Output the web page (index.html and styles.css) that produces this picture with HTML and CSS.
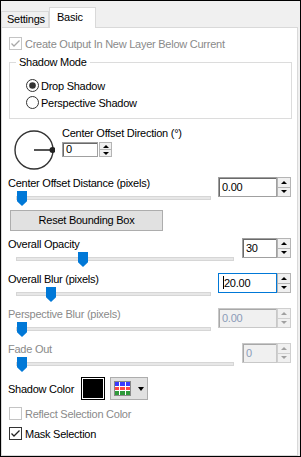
FILE: index.html
```html
<!DOCTYPE html>
<html>
<head>
<meta charset="utf-8">
<link rel="stylesheet" href="styles.css">
</head>
<body>
<div class="frame">
  <div class="tabs">
    <div class="tab">Settings</div>
    <div class="tab active">Basic</div>
  </div>
  <div class="panel">
    <div class="check-row first disabled">
      <svg class="cb" width="13" height="13" viewBox="0 0 13 13"><rect class="cb-box" x="0.5" y="0.5" width="12" height="12"/><path class="cb-mark" d="M2.5 6.5 L5 9 L10.5 3.5"/></svg>
      <span>Create Output In New Layer Below Current</span>
    </div>

    <fieldset class="group">
      <legend>Shadow Mode</legend>
      <div class="radio-row first">
        <svg class="rb" width="13" height="13" viewBox="0 0 13 13"><circle class="rb-ring" cx="6.5" cy="6.5" r="6"/><circle class="rb-dot" cx="6.5" cy="6.5" r="3.3"/></svg>
        <span>Drop Shadow</span>
      </div>
      <div class="radio-row">
        <svg class="rb" width="13" height="13" viewBox="0 0 13 13"><circle class="rb-ring" cx="6.5" cy="6.5" r="6"/></svg>
        <span>Perspective Shadow</span>
      </div>
    </fieldset>

    <div class="dial-row">
      <svg class="dial" width="42" height="42" viewBox="0 0 42 42"><circle class="dial-ring" cx="21" cy="21" r="19"/><line class="dial-hand" x1="21" y1="21" x2="39" y2="21"/><circle class="dial-knob" cx="39.5" cy="21" r="3"/></svg>
      <div class="dial-col">
        <div class="lbl">Center Offset Direction (°)</div>
        <div class="spin small">
          <div class="box">0</div>
          <div class="arrows"><span class="up"></span><span class="dn"></span></div>
        </div>
      </div>
    </div>

    <div class="ctl dist">
      <div class="lbl">Center Offset Distance (pixels)</div>
      <div class="spin">
        <div class="box">0.00</div>
        <div class="arrows"><span class="up"></span><span class="dn"></span></div>
      </div>
      <div class="slider"><div class="track"></div><div class="thumb" style="left:1px"></div></div>
    </div>

    <div class="btn">Reset Bounding Box</div>

    <div class="ctl narrow opacity">
      <div class="lbl">Overall Opacity</div>
      <div class="spin">
        <div class="box">30</div>
        <div class="arrows"><span class="up"></span><span class="dn"></span></div>
      </div>
      <div class="slider"><div class="track"></div><div class="thumb" style="left:62px"></div></div>
    </div>

    <div class="ctl">
      <div class="lbl">Overall Blur (pixels)</div>
      <div class="spin focused">
        <div class="box"><span class="caret"></span>20.00</div>
        <div class="arrows"><span class="up"></span><span class="dn"></span></div>
      </div>
      <div class="slider"><div class="track"></div><div class="thumb" style="left:30px"></div></div>
    </div>

    <div class="ctl disabled">
      <div class="lbl">Perspective Blur (pixels)</div>
      <div class="spin">
        <div class="box">0.00</div>
        <div class="arrows"><span class="up"></span><span class="dn"></span></div>
      </div>
      <div class="slider"><div class="track"></div><div class="thumb" style="left:1px"></div></div>
    </div>

    <div class="ctl narrow disabled">
      <div class="lbl">Fade Out</div>
      <div class="spin">
        <div class="box">0</div>
        <div class="arrows"><span class="up"></span><span class="dn"></span></div>
      </div>
      <div class="slider"><div class="track"></div><div class="thumb" style="left:1px"></div></div>
    </div>

    <div class="color-row">
      <div class="color-lbl">Shadow Color</div>
      <div class="swatch"><div class="swatch-fill"></div></div>
      <div class="pick-btn">
        <svg class="palette" width="17" height="15" viewBox="0 0 17 15">
          <rect class="pal-bg" x="0.5" y="0.5" width="16" height="14"/>
          <rect class="pal-b" x="1" y="1" width="4" height="4"/><rect class="pal-b" x="6" y="1" width="5" height="4"/><rect class="pal-b" x="12" y="1" width="4" height="4"/>
          <rect class="pal-r" x="1" y="6" width="4" height="3"/><rect class="pal-r" x="6" y="6" width="5" height="3"/><rect class="pal-r" x="12" y="6" width="4" height="3"/>
          <rect class="pal-g" x="1" y="10" width="4" height="4"/><rect class="pal-g" x="6" y="10" width="5" height="4"/><rect class="pal-g" x="12" y="10" width="4" height="4"/>
        </svg>
        <span class="drop"></span>
      </div>
    </div>

    <div class="check-row reflect disabled">
      <svg class="cb" width="13" height="13" viewBox="0 0 13 13"><rect class="cb-box" x="0.5" y="0.5" width="12" height="12"/></svg>
      <span>Reflect Selection Color</span>
    </div>

    <div class="check-row mask">
      <svg class="cb" width="13" height="13" viewBox="0 0 13 13"><rect class="cb-box" x="0.5" y="0.5" width="12" height="12"/><path class="cb-mark" d="M2.5 6.5 L5 9 L10.5 3.5"/></svg>
      <span>Mask Selection</span>
    </div>
  </div>
</div>
</body>
</html>
```

FILE: styles.css
```css
html, body {
  margin: 0;
  padding: 0;
}

body {
  font-family: "Liberation Sans", Arial, sans-serif;
  font-size: 11px;
  letter-spacing: -0.25px;
  color: #000;
  background: #fff;
}

.frame {
  width: 301px;
  height: 457px;
  box-sizing: border-box;
  border: 1px solid #000;
  background: #f0f0f0;
  padding-right: 2px;
  display: flex;
  flex-direction: column;
}

/* Tabs */
.tabs {
  display: flex;
  align-items: flex-end;
  height: 26px;
  flex: none;
  position: relative;
  z-index: 1;
}

.tab {
  box-sizing: border-box;
  height: 16px;
  width: 48px;
  border: 1px solid #d9d9d9;
  border-bottom: none;
  background: #f0f0f0;
  padding-left: 5px;
  line-height: 14px;
  white-space: nowrap;
}

.tab.active {
  height: 21px;
  width: 47px;
  background: #fff;
  margin-bottom: -1px;
  padding-left: 7px;
  padding-top: 2px;
}

/* Panel */
.panel {
  flex: 1;
  box-sizing: border-box;
  background: #fff;
  border: 1px solid #d9d9d9;
  padding: 0 6px;
  display: flex;
  flex-direction: column;
}

.lbl {
  line-height: 14px;
  white-space: nowrap;
}

.disabled .lbl,
.check-row.disabled span {
  color: #8a8a8a;
}

/* Checkboxes */
.check-row {
  display: flex;
  align-items: center;
  gap: 3px;
  height: 15px;
  margin-left: 1px;
  white-space: nowrap;
}

.check-row.first { margin-top: 8px; }
.check-row.reflect { margin-top: 6px; }
.check-row.mask { margin-top: 5px; }

.cb { flex: none; display: block; }
.cb-box { fill: #fff; stroke: #333; }
.cb-mark { fill: none; stroke: #222; stroke-width: 1.3; }
.disabled .cb-box { stroke: #c4c4c4; }
.disabled .cb-mark { stroke: #a8a8a8; }

/* Group box */
.group {
  margin: 4px 0 0 1px;
  width: 283px;
  box-sizing: border-box;
  border: 1px solid #dcdcdc;
  padding: 0 0 7px 0;
  min-width: 0;
}

.group legend {
  margin-left: 6px;
  padding: 0 3px;
  line-height: 14px;
}

.radio-row {
  display: flex;
  align-items: center;
  gap: 2px;
  height: 17px;
  padding-left: 16px;
  white-space: nowrap;
}

.radio-row.first { margin-top: 8px; }

.rb { display: block; flex: none; }
.rb-ring { fill: #fff; stroke: #333; }
.rb-dot { fill: #333; }

/* Direction dial */
.dial-row {
  display: flex;
  margin-top: 7px;
  height: 46px;
}

.dial {
  display: block;
  margin: 3px 0 0 5px;
  flex: none;
}

.dial-ring { fill: none; stroke: #333; stroke-width: 1.4; }
.dial-hand { stroke: #555; stroke-width: 2; }
.dial-knob { fill: #222; }

.dial-col {
  margin-left: 7px;
  display: flex;
  flex-direction: column;
  align-items: flex-start;
}

.dial-col .spin { margin-top: 2px; }

/* Spin boxes */
.spin {
  display: flex;
}

.spin .box {
  box-sizing: border-box;
  height: 20px;
  width: 59px;
  border: 1px solid #a0a0a0;
  box-shadow: inset 1px 1px 0 #6a6a6a;
  background: #fff;
  padding-left: 3px;
  line-height: 18px;
  white-space: nowrap;
}

.narrow .spin .box { width: 35px; }

.spin.small .box {
  width: 36px;
  height: 15px;
  line-height: 13px;
}

.spin.small .arrows {
  margin-left: 1px;
  width: 13px;
  height: 15px;
}

.arrows {
  width: 14px;
  height: 20px;
  display: flex;
  flex-direction: column;
}

.arrows span {
  flex: 1;
  box-sizing: border-box;
  border: 1px solid #b4b4b4;
  background: #f0f0f0;
  display: flex;
  align-items: center;
  justify-content: center;
}

.arrows .dn { border-top: none; }

.arrows span::after {
  content: "";
  width: 0;
  height: 0;
  border-left: 3px solid transparent;
  border-right: 3px solid transparent;
}

.arrows .up::after { border-bottom: 3px solid #000; }
.arrows .dn::after { border-top: 3px solid #000; }

.spin.focused .box {
  border-color: #0078d7;
  box-shadow: none;
  padding-left: 4px;
}

.caret {
  display: inline-block;
  width: 1px;
  height: 13px;
  background: #000;
  vertical-align: -2px;
}

.disabled .spin .box {
  background: #f0f0f0;
  border-color: #c8c8c8;
  box-shadow: inset 1px 1px 0 #a8a8a8;
  color: #8c9bb8;
}

.disabled .arrows span { border-color: #cfcfcf; }
.disabled .arrows .up::after { border-bottom-color: #a0a0a0; }
.disabled .arrows .dn::after { border-top-color: #a0a0a0; }

/* Slider controls */
.ctl {
  display: grid;
  grid-template-columns: 1fr auto;
  grid-template-rows: 14px 20px;
  column-gap: 7px;
  margin-top: 1px;
}

.ctl.narrow { column-gap: 8px; }
.ctl.dist { margin-top: 4px; }
.ctl.opacity { margin-top: 6px; }

.ctl .lbl { grid-column: 1; grid-row: 1; }

.ctl .spin {
  grid-column: 2;
  grid-row: 1 / 3;
  margin-top: 1px;
  align-self: start;
}

.slider {
  grid-column: 1;
  grid-row: 2;
  position: relative;
  margin-left: 8px;
}

.track {
  margin-top: 6px;
  height: 4px;
  box-sizing: border-box;
  background: #e7e7e7;
  border: 1px solid #d6d6d6;
}

.thumb {
  position: absolute;
  top: 1px;
  width: 10px;
  height: 15px;
  background: #0078d7;
  clip-path: polygon(0 0, 100% 0, 100% 68%, 50% 100%, 0 68%);
}

/* Button */
.btn {
  margin-left: 2px;
  width: 153px;
  height: 21px;
  box-sizing: border-box;
  border: 1px solid #adadad;
  background: #e1e1e1;
  text-align: center;
  line-height: 19px;
}

/* Shadow color */
.color-row {
  display: flex;
  align-items: center;
  height: 23px;
  margin-top: 1px;
}

.color-lbl {
  width: 73px;
  white-space: nowrap;
}

.swatch {
  width: 24px;
  height: 23px;
  box-sizing: border-box;
  border: 1px solid #000;
  padding: 1px;
  background: #fff;
}

.swatch-fill {
  width: 100%;
  height: 100%;
  background: #000;
}

.pick-btn {
  margin-left: 5px;
  width: 38px;
  height: 23px;
  box-sizing: border-box;
  border: 1px solid #adadad;
  background: #e1e1e1;
  display: flex;
  align-items: center;
  padding-left: 3px;
}

.palette { display: block; flex: none; }
.pal-bg { fill: #fff; stroke: #8a8a8a; }
.pal-b { fill: #3a3aff; }
.pal-r { fill: #ff4646; }
.pal-g { fill: #2e9a3a; }

.drop {
  margin-left: 7px;
  width: 0;
  height: 0;
  border-left: 3.5px solid transparent;
  border-right: 3.5px solid transparent;
  border-top: 4px solid #000;
}
```
